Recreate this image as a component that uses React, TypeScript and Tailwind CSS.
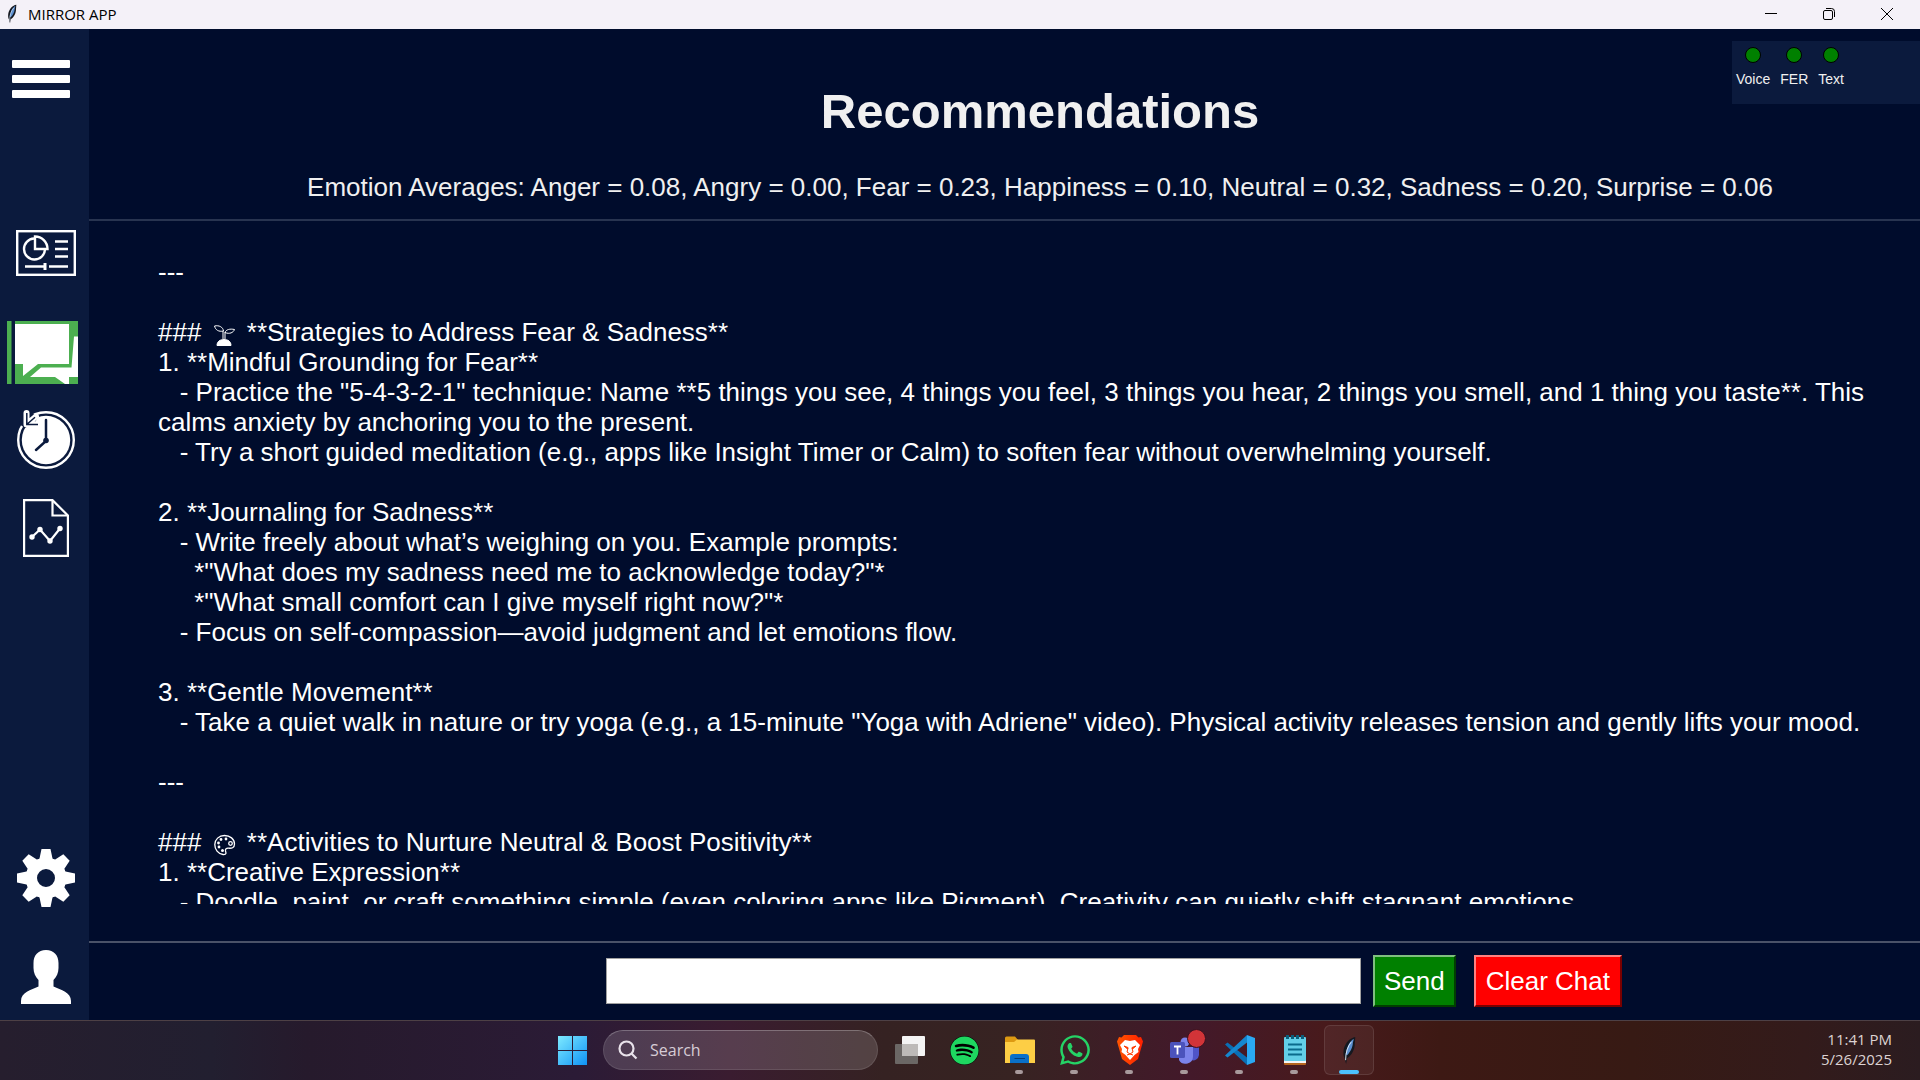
import type { ReactNode } from "react";
import { FaSpotify, FaWhatsapp } from "react-icons/fa6";

function Feather({ className }: { className: string }) {
  return (
    <svg viewBox="0 0 16 30" className={className} aria-hidden="true">
      <path d="M14.500 1C9 2 4 7 2.500 14c-.6 4-.3 7 .9 9L5 29l1-6c5-3 8-9 8-15z" fill="#15181f" />
      <path d="M13 3C9 5 6 10 4.500 19l1.500 1c3-3 6-8 6-13z" fill="#5b8fd0" />
      <path d="M10.500 6C6.500 11 4.500 17 4.500 25" stroke="#dbe7f5" strokeWidth="1" fill="none" />
    </svg>
  );
}

function MenuIcon() {
  return (
    <svg width="58" height="38" viewBox="0 0 58 38" fill="#fff" aria-hidden="true">
      <rect width="58" height="8" rx="1" />
      <rect y="15" width="58" height="8" rx="1" />
      <rect y="30" width="58" height="8" rx="1" />
    </svg>
  );
}

function DashboardIcon() {
  return (
    <svg width="60" height="46" viewBox="0 0 60 46" fill="none" stroke="#fff" strokeWidth="2.400" aria-hidden="true">
      <rect x="1.200" y="1.200" width="57.600" height="43.600" />
      <path d="M18 8.500a10.500 10.500 0 1 0 11 11" />
      <path d="M19 6.500v12.500h12.500A12.500 12.500 0 0 0 19 6.500z" />
      <path d="M39 11.500h13M39 19h13M39 26.500h13M9 36.500h20M33 36.500h19" />
      <path d="M29 33v7" strokeWidth="3" />
    </svg>
  );
}

function ChatIcon() {
  return (
    <svg width="71" height="63" viewBox="0 0 71 63" aria-hidden="true">
      <rect width="4.500" height="63" fill="#4caf50" />
      <rect x="8" width="63" height="63" fill="#4caf50" />
      <path d="M8 3h54v40H31L16 55V43H8z" fill="#fff" />
      <path d="M67 15.500h4V56h-9v7h-4L48 56H23l11-9.500h30.500z" fill="#fff" />
    </svg>
  );
}

function HistoryIcon() {
  return (
    <svg width="58" height="60" viewBox="0 0 58 60" fill="none" aria-hidden="true">
      <circle cx="29" cy="30" r="27.800" stroke="#fff" strokeWidth="2.400" />
      <circle cx="29" cy="30" r="24.200" fill="#fff" />
      <path d="M2 14L6 4h10l6 2-4 6-10 6z" fill="#0b1a3d" />
      <path d="M9.500 3v11.500H21M10 14l9-7.500" stroke="#fff" strokeWidth="6" strokeLinecap="round" strokeLinejoin="round" />
      <path d="M9.800 3v11.500H21M10 14.200l8-7" stroke="#0b1a3d" strokeWidth="1.500" />
      <path d="M29 10v21L19 40" stroke="#0b1a3d" strokeWidth="2.500" strokeLinecap="round" />
      <circle cx="29" cy="30.500" r="2.800" fill="#0b1a3d" />
    </svg>
  );
}

function ReportIcon() {
  return (
    <svg width="46" height="58" viewBox="0 0 46 58" fill="none" stroke="#fff" strokeWidth="2.200" aria-hidden="true">
      <path d="M1.100 1.100h28.400L44.900 16.500V56.900H1.100z" />
      <path d="M29.500 1v15.500H45" />
      <path d="M9 38l8-7.500L27 42l10-12.500" />
      <g fill="#fff" stroke="none">
        <circle cx="9" cy="38" r="2.700" />
        <circle cx="17" cy="30.500" r="2.700" />
        <circle cx="27" cy="42" r="2.700" />
        <circle cx="37" cy="29.500" r="2.700" />
      </g>
    </svg>
  );
}

function GearIcon() {
  return (
    <svg width="58" height="58" viewBox="0 0 58 58" aria-hidden="true">
      <circle cx="29" cy="29" r="14.500" fill="none" stroke="#fff" strokeWidth="11" />
      {[0, 45, 90, 135, 180, 225, 270, 315].map((a) => (
        <path key={a} d="M24.500 0h9l2 9.500 3 2H19.500l3-2z" fill="#fff" transform={`rotate(${a} 29 29)`} />
      ))}
    </svg>
  );
}

function PersonIcon() {
  return (
    <svg width="50" height="54" viewBox="0 0 50 54" fill="#fff" aria-hidden="true">
      <path d="M25 0c8 0 12.500 5.500 12.500 13v5c0 5-2 9-5 12v6.500C40 40 50 42 50 51v3H0v-3c0-9 10-11 17.500-14.500V30c-3-3-5-7-5-12v-5C12.500 5.500 17 0 25 0z" />
    </svg>
  );
}

function Seedling() {
  return (
    <svg width="31" height="22" viewBox="-5 0 31 22" className="inline-block align-[-5px]" fill="none" stroke="#fff" strokeWidth="1" aria-label="Seedling">
      <path d="M3 21.500c0-4 3-6 7-6s7 2 7 6z" fill="#fff" />
      <path d="M9 15V7M11 15V8" />
      <path d="M9.500 7C9 3 5 1 .5 2c1 4 4 6 9 5z" />
      <path d="M11 8.500c1-3 5-4 9.500-3-1 3-5 5-9.500 3z" />
    </svg>
  );
}

function Palette() {
  return (
    <svg width="31" height="22" viewBox="-5 0 31 22" className="inline-block align-[-5px]" fill="none" stroke="#fff" strokeWidth="1.300" aria-label="Palette">
      <path d="M10.500 1.500C5 1.500.800 5.500.800 10.500S4 20 9 20.500c4 .4 3-2 2.500-3.500-.5-2 1-3 3-2.800 3 .3 6-.2 6-4.200 0-5-4.500-8.500-10-8.500z" />
      <circle cx="16.500" cy="9.500" r="1.800" />
      <g fill="#fff" stroke="none">
        <circle cx="12" cy="5" r="1.400" />
        <circle cx="7" cy="5.500" r="1.400" />
        <circle cx="4.500" cy="9" r="1.400" />
        <circle cx="5" cy="13" r="1.400" />
        <circle cx="8.500" cy="16.500" r="1.500" />
      </g>
    </svg>
  );
}

const lines: ReactNode[] = [
  "---",
  "",
  <>### <Seedling /> **Strategies to Address Fear &amp; Sadness**</>,
  "1. **Mindful Grounding for Fear**",
  "   - Practice the \"5-4-3-2-1\" technique: Name **5 things you see, 4 things you feel, 3 things you hear, 2 things you smell, and 1 thing you taste**. This calms anxiety by anchoring you to the present.",
  "   - Try a short guided meditation (e.g., apps like Insight Timer or Calm) to soften fear without overwhelming yourself.",
  "",
  "2. **Journaling for Sadness**",
  "   - Write freely about what’s weighing on you. Example prompts:",
  "     *\"What does my sadness need me to acknowledge today?\"*",
  "     *\"What small comfort can I give myself right now?\"*",
  "   - Focus on self-compassion—avoid judgment and let emotions flow.",
  "",
  "3. **Gentle Movement**",
  "   - Take a quiet walk in nature or try yoga (e.g., a 15-minute \"Yoga with Adriene\" video). Physical activity releases tension and gently lifts your mood.",
  "",
  "---",
  "",
  <>### <Palette /> **Activities to Nurture Neutral &amp; Boost Positivity**</>,
  "1. **Creative Expression**",
  "   - Doodle, paint, or craft something simple (even coloring apps like Pigment). Creativity can quietly shift stagnant emotions.",
];

function TitleBar() {
  return (
    <header className="flex h-[29px] shrink-0 items-center bg-[#f4f1f8] pb-px font-['Open_Sans',sans-serif] text-black">
      <Feather className="ml-1.5 h-5 w-3" />
      <span className="ml-2.5 flex-1 text-[15px] leading-5">MIRROR APP</span>
      <button aria-label="Minimize" className="flex h-full w-[58px] items-center justify-center">
        <svg width="12" height="12" stroke="#000"><path d="M0 5.500h12" /></svg>
      </button>
      <button aria-label="Restore" className="flex h-full w-[58px] items-center justify-center">
        <svg width="12" height="12" fill="none" stroke="#000">
          <rect x=".5" y="2.500" width="9" height="9" rx="1.500" />
          <path d="M3 .5h5.500a3 3 0 0 1 3 3V9" />
        </svg>
      </button>
      <button aria-label="Close" className="mr-1 flex h-full w-[58px] items-center justify-center">
        <svg width="12" height="12" stroke="#000"><path d="M0 0l12 12M12 0L0 12" /></svg>
      </button>
    </header>
  );
}

function Sidebar() {
  return (
    <nav aria-label="Main" className="flex w-[89px] shrink-0 flex-col items-start bg-[#0b1a3d]">
      <button aria-label="Menu" className="mt-[31px] ml-3"><MenuIcon /></button>
      <button aria-label="Dashboard" className="mt-[132px] ml-4"><DashboardIcon /></button>
      <button aria-label="Chat" className="mt-[45px] ml-[7px]"><ChatIcon /></button>
      <button aria-label="History" className="mt-[26px] ml-[17px]"><HistoryIcon /></button>
      <button aria-label="Reports" className="mt-[29px] ml-[23px]"><ReportIcon /></button>
      <button aria-label="Settings" className="mt-auto ml-[17px]"><GearIcon /></button>
      <button aria-label="Profile" className="mt-[43px] mb-4 ml-[21px]"><PersonIcon /></button>
    </nav>
  );
}

function Status({ label }: { label: string }) {
  return (
    <li className="flex flex-col items-center gap-2">
      <span className="size-4 rounded-full border border-black bg-[#008000]" />
      <span>{label}</span>
    </li>
  );
}

function FolderIcon() {
  return (
    <svg width="30" height="28" viewBox="0 0 30 28" aria-hidden="true">
      <path d="M0 2a1.500 1.500 0 0 1 1.500-1.500H10L13 4v4H0z" fill="#dd9a12" />
      <path d="M0 6h9l3-2.500h17A1 1 0 0 1 30 4.500V27H0z" fill="#fdce45" />
      <path d="M5 27v-6a3 3 0 0 1 3-3h13a3 3 0 0 1 3 3v6z" fill="#0a70c8" />
      <path d="M9.500 22.500h10.500" stroke="#063f78" strokeWidth="1" />
    </svg>
  );
}

function TeamsIcon() {
  return (
    <span className="relative block">
      <svg width="30" height="28" viewBox="0 0 30 28" aria-hidden="true">
        <path d="M20 11h9v8a6 6 0 0 1-8 5z" fill="#4f54c8" />
        <circle cx="15" cy="6" r="4.500" fill="#7b83eb" />
        <path d="M9 11h14v9a7.500 7.500 0 0 1-14 4z" fill="#7b83eb" />
        <rect y="6" width="15" height="16" rx="1.500" fill="#4b53bc" />
        <path d="M4 10.500h7M7.500 10.500v8" stroke="#fff" strokeWidth="1.800" />
      </svg>
      <span className="absolute -top-[7px] -right-[6px] size-[19px] rounded-full border border-[#3d1220] bg-[#d13438]" />
    </span>
  );
}

function CodeIcon() {
  return (
    <svg width="30" height="30" viewBox="0 0 30 30" aria-hidden="true">
      <path d="M0 9.500L2.500 7.500 22 22.500V30z" fill="#0a6fb5" />
      <path d="M0 20.500l2.500 2L22 7.500V0z" fill="#1587cf" />
      <path d="M22 0l8 3v24l-8 3z" fill="#2aa9f3" />
    </svg>
  );
}

function NotepadIcon() {
  return (
    <svg width="22" height="30" viewBox="0 0 22 30" aria-hidden="true">
      <rect y="26" width="22" height="4" rx="1" fill="#b5651d" />
      <rect y="25" width="22" height="3" fill="#f4f4f4" />
      <rect y="2" width="22" height="24" rx="1" fill="#63cfe8" />
      <path d="M4 9.500h14M4 14.500h14M4 19.500h14" stroke="#0a6b8c" strokeWidth="2" />
      <path d="M3.500 0v4M8.500 0v4M13.500 0v4M18.500 0v4" stroke="#0b5f7c" strokeWidth="3" />
    </svg>
  );
}

function TaskItem({ label, children, running = true }: { label: string; children: ReactNode; running?: boolean }) {
  return (
    <button aria-label={label} className="relative flex h-[50px] w-[55px] items-center justify-center">
      {children}
      {running && <span className="absolute bottom-px left-[23px] h-1 w-2 rounded-full bg-[#a89a9c]" />}
    </button>
  );
}

function Taskbar() {
  return (
    <footer className="grid h-[60px] shrink-0 grid-cols-[1fr_auto_1fr] items-center border-t border-[#4d4045] bg-[linear-gradient(90deg,#261e2e_0%,#221f30_11%,#261a2c_16%,#2b1b36_30%,#3a1c30_38%,#352222_46%,#372322_53%,#43192a_62%,#481a1c_69%,#3d1914_75%,#371a14_85%,#331b1b_94%,#2b1c20_100%)] pb-px font-['Open_Sans',sans-serif] text-white">
      <span />
      <div className="flex items-center pl-3">
        <button aria-label="Start" className="mr-4">
          <svg width="29" height="29" viewBox="0 0 29 29" aria-hidden="true">
            <defs>
              <linearGradient id="win" x1="0" y1="0" x2="29" y2="29" gradientUnits="userSpaceOnUse">
                <stop stopColor="#7eeaff" />
                <stop offset="1" stopColor="#0f93f5" />
              </linearGradient>
            </defs>
            <path d="M0 0h14v14H0zM15 0h14v14H15zM0 15h14v14H0zM15 15h14v14H15z" fill="url(#win)" />
          </svg>
        </button>
        <label className="flex h-10 w-[275px] items-center gap-3 rounded-full border border-white/10 border-t-white/25 bg-white/15 px-3.5">
          <svg width="20" height="20" viewBox="0 0 20 20" fill="none" stroke="#e8e2ea" strokeWidth="2.200" aria-hidden="true">
            <circle cx="8.500" cy="8.500" r="7" />
            <path d="M13.500 13.500L18.500 18.500" />
          </svg>
          <input aria-label="Search" placeholder="Search" className="min-w-0 flex-1 bg-transparent text-base outline-none placeholder:text-[#d6ccd6]" />
        </label>
        <div className="ml-1 flex">
          <TaskItem label="Task view" running={false}>
            <svg width="30" height="28" viewBox="0 0 30 28" aria-hidden="true">
              <rect y="8" width="23" height="20" rx="1" fill="#6b6765" />
              <rect x="7" width="23" height="20" rx="1" fill="#f4f4f4" />
              <rect x="7" y="8" width="16" height="12" fill="#bdbab8" />
            </svg>
          </TaskItem>
          <TaskItem label="Spotify" running={false}>
            <span className="rounded-full bg-black"><FaSpotify size={29} color="#1ed760" /></span>
          </TaskItem>
          <TaskItem label="File Explorer"><FolderIcon /></TaskItem>
          <TaskItem label="WhatsApp"><FaWhatsapp size={34} color="#25d366" /></TaskItem>
          <TaskItem label="Brave">
            <svg width="26" height="30" viewBox="0 0 26 30" aria-hidden="true">
              <defs>
                <linearGradient id="brave"><stop stopColor="#ff5500" /><stop offset="1" stopColor="#ff2000" /></linearGradient>
              </defs>
              <path d="M7 0h12l2.500 2.500L24 2l2 4.500-1 3.500-4 14-8 6-8-6L1 10 0 6.500 2 2l2.500.500z" fill="url(#brave)" />
              <path d="M8 5l5 1 5-1 5 5-2 4 .5 3-4 3-4.500 5-4.500-5-4-3 .5-3-2-4z" fill="#fff" />
              <path d="M7 11l4 1.500-.500 1.500zM19 11l-4 1.500.500 1.500z" fill="#ff3b00" stroke="#ff3b00" strokeWidth="1" />
              <path d="M11 13l-1 4 3 2 3-2-1-4M10 20l3-1 3 1" fill="none" stroke="#ff3b00" strokeWidth="1" />
            </svg>
          </TaskItem>
          <TaskItem label="Teams"><TeamsIcon /></TaskItem>
          <TaskItem label="Visual Studio Code"><CodeIcon /></TaskItem>
          <TaskItem label="Notepad"><NotepadIcon /></TaskItem>
          <button aria-label="Mirror App" className="relative ml-0.5 flex h-[50px] w-[50px] items-center justify-center rounded-md border border-white/10 bg-white/5">
            <Feather className="h-[29px] w-4" />
            <span className="absolute bottom-0 left-[14px] h-1 w-5 rounded-full bg-[#4cc2ff]" />
          </button>
        </div>
      </div>
      <p className="pr-7 pb-0.5 text-right text-[15px] leading-5 text-[#ddd3d3]">
        11:41 PM<br />5/26/2025
      </p>
    </footer>
  );
}

export default function App() {
  return (
    <div className="flex h-screen flex-col overflow-hidden bg-[#000c2c] font-['Liberation_Sans',Arial,sans-serif] text-white">
      <TitleBar />
      <div className="flex min-h-0 flex-1">
        <Sidebar />
        <main className="flex min-w-0 flex-1 flex-col">
          <section className="relative h-[192px] shrink-0 border-b-2 border-[#283450] pt-[54px] pl-[71px] text-center text-[#f0f0f0]">
            <h1 className="text-[49px] leading-[56px] font-bold">Recommendations</h1>
            <p className="mt-[33px] text-[26px] leading-[30px]">
              Emotion Averages: Anger = 0.08, Angry = 0.00, Fear = 0.23, Happiness = 0.10, Neutral = 0.32, Sadness = 0.20, Surprise = 0.06
            </p>
            <ul className="absolute top-3 right-0 flex h-[63px] w-[188px] gap-2.5 bg-[#0b1a3d] pt-1.5 pl-1 text-sm leading-4">
              <Status label="Voice" />
              <Status label="FER" />
              <Status label="Text" />
            </ul>
          </section>
          <section aria-label="Chat" className="mb-[37px] min-h-0 flex-1 overflow-hidden pt-9 pr-5 pl-[69px] text-[26px] leading-[30px]">
            {lines.map((line, i) => (
              <p key={i} className="min-h-[30px] whitespace-pre-wrap">{line}</p>
            ))}
          </section>
          <form className="flex h-[79px] shrink-0 items-start border-t-2 border-[#4a5268] pt-3 pr-[298px] pl-[517px] text-[26px] leading-[30px]" onSubmit={(e) => e.preventDefault()}>
            <input aria-label="Message" className="mt-[3px] h-[46px] min-w-0 flex-1 border border-[#a0a0a0] bg-white px-1 text-black outline-none" />
            <button className="ml-3 h-[52px] border-2 border-t-[#7fbf7f] border-r-[#003f00] border-b-[#003f00] border-l-[#7fbf7f] bg-[#008000] px-[9px]">Send</button>
            <button type="button" className="ml-[18px] h-[52px] border-2 border-t-[#ff8080] border-r-[#7a0000] border-b-[#7a0000] border-l-[#ff8080] bg-[#ff0000] px-[10px]">Clear Chat</button>
          </form>
        </main>
      </div>
      <Taskbar />
    </div>
  );
}
